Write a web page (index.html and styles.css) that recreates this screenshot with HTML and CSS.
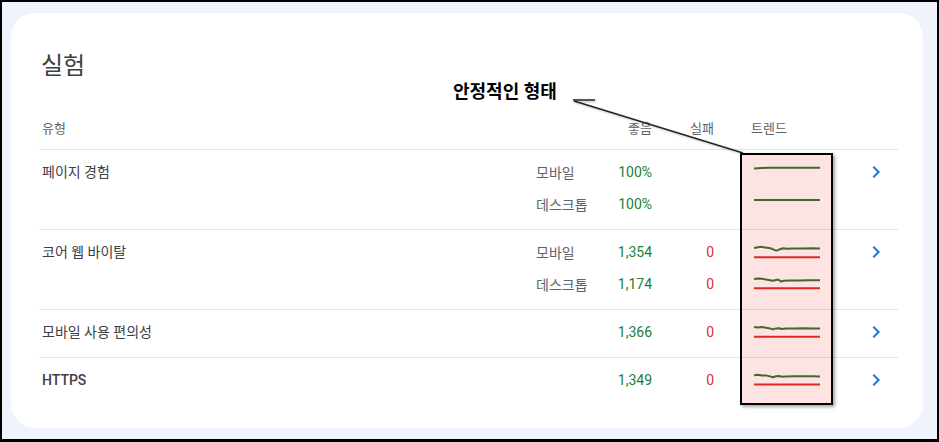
FILE: index.html
```html
<!DOCTYPE html>
<html lang="ko">
<head>
<meta charset="utf-8">
<title>실험</title>
<link rel="stylesheet" href="styles.css">
</head>
<body>
<div class="frame">
  <div class="card">
    <h1 class="title">실험</h1>

    <div class="header">
      <div class="h-type">유형</div>
      <div class="sub">
        <div class="c-dev"></div>
        <div class="c-good">좋음</div>
        <div class="c-fail">실패</div>
        <div class="c-trend h-trend">트렌드</div>
      </div>
      <div class="c-chev"></div>
    </div>

    <div class="row">
      <div class="r-type">페이지 경험</div>
      <div class="subs">
        <div class="sub">
          <div class="c-dev">모바일</div>
          <div class="c-good">100%</div>
          <div class="c-fail"></div>
          <div class="c-trend">
            <svg class="spark" viewBox="0 0 66 20" width="66" height="20"><path class="g" d="M0,6.6 L4,6.2 L8,5.9 L14,5.8 L66,5.8"/></svg>
          </div>
        </div>
        <div class="sub">
          <div class="c-dev">데스크톱</div>
          <div class="c-good">100%</div>
          <div class="c-fail"></div>
          <div class="c-trend">
            <svg class="spark" viewBox="0 0 66 20" width="66" height="20"><path class="g" d="M0,6 L66,6"/></svg>
          </div>
        </div>
      </div>
      <div class="c-chev"><svg viewBox="0 0 24 24" width="24" height="24"><path class="chev" d="M10 6 8.59 7.41 13.17 12l-4.58 4.59L10 18l6-6z"/></svg></div>
    </div>

    <div class="row">
      <div class="r-type">코어 웹 바이탈</div>
      <div class="subs">
        <div class="sub">
          <div class="c-dev">모바일</div>
          <div class="c-good">1,354</div>
          <div class="c-fail">0</div>
          <div class="c-trend">
            <svg class="spark" viewBox="0 0 66 20" width="66" height="20"><path class="g" d="M0,6 L4,5.2 L7,4.8 L11,5.4 L15,6 L18,6.8 L21,8.2 L23,8.6 L26,7.2 L29,6.2 L33,6.8 L40,6.6 L50,6.4 L58,6.3 L66,6.5"/><path class="r" d="M0,15.3 L66,15.3"/></svg>
          </div>
        </div>
        <div class="sub">
          <div class="c-dev">데스크톱</div>
          <div class="c-good">1,174</div>
          <div class="c-fail">0</div>
          <div class="c-trend">
            <svg class="spark" viewBox="0 0 66 20" width="66" height="20"><path class="g" d="M0,5 L4,4.4 L8,4.8 L12,5.6 L16,6.2 L19,6.8 L22,6 L24,5.6 L27,7.4 L30,6.8 L35,6.6 L45,6.4 L55,6.2 L66,6.2"/><path class="r" d="M0,14.3 L66,14.3"/></svg>
          </div>
        </div>
      </div>
      <div class="c-chev"><svg viewBox="0 0 24 24" width="24" height="24"><path class="chev" d="M10 6 8.59 7.41 13.17 12l-4.58 4.59L10 18l6-6z"/></svg></div>
    </div>

    <div class="row">
      <div class="r-type">모바일 사용 편의성</div>
      <div class="subs">
        <div class="sub">
          <div class="c-dev"></div>
          <div class="c-good">1,366</div>
          <div class="c-fail">0</div>
          <div class="c-trend">
            <svg class="spark" viewBox="0 0 66 20" width="66" height="20"><path class="g" d="M0,5 L4,5.6 L8,5 L12,5.8 L16,6.4 L19,7.4 L22,6.4 L25,6.2 L28,7 L32,6.4 L40,6.4 L50,6.2 L58,6.4 L66,6.6"/><path class="r" d="M0,14.8 L66,14.8"/></svg>
          </div>
        </div>
      </div>
      <div class="c-chev"><svg viewBox="0 0 24 24" width="24" height="24"><path class="chev" d="M10 6 8.59 7.41 13.17 12l-4.58 4.59L10 18l6-6z"/></svg></div>
    </div>

    <div class="row last">
      <div class="r-type bold">HTTPS</div>
      <div class="subs">
        <div class="sub">
          <div class="c-dev"></div>
          <div class="c-good">1,349</div>
          <div class="c-fail">0</div>
          <div class="c-trend">
            <svg class="spark" viewBox="0 0 66 20" width="66" height="20"><path class="g" d="M0,5.2 L4,4.8 L8,5.6 L12,5.4 L16,6.4 L19,7.2 L22,6.2 L25,6 L28,6.8 L32,6.4 L40,6.2 L50,6.2 L58,6.2 L66,6.4"/><path class="r" d="M0,14.6 L66,14.6"/></svg>
          </div>
        </div>
      </div>
      <div class="c-chev"><svg viewBox="0 0 24 24" width="24" height="24"><path class="chev" d="M10 6 8.59 7.41 13.17 12l-4.58 4.59L10 18l6-6z"/></svg></div>
    </div>

    <div class="note">안정적인 형태</div>
    <svg class="arrow" viewBox="0 0 185 70" width="185" height="70">
      <path class="arrow-short" d="M7,7 L29,7"/>
      <path class="arrow-line" d="M8,8 L177,60"/>
    </svg>
    <div class="highlight"></div>
  </div>
</div>
</body>
</html>
```

FILE: styles.css
```css
* { box-sizing: border-box; }

html, body {
  margin: 0;
  padding: 0;
  width: 939px;
  height: 442px;
  overflow: hidden;
  background: #000;
}

body {
  font-family: Roboto, "Noto Sans CJK KR", sans-serif;
  color: #3c4043;
}

.frame {
  width: 939px;
  height: 442px;
  border-style: solid;
  border-color: #000;
  border-width: 2px 2px 3px 2px;
  background: #eff3fb;
  padding: 11px 14px 11px 9px;
}

.card {
  position: relative;
  height: 415px;
  background: #fff;
  border-radius: 24px;
  padding: 37px 25px 0 28px;
}

.title {
  margin: 0;
  font-size: 24px;
  line-height: 32px;
  font-weight: 400;
  color: #3c4043;
  padding-left: 2px;
}

.header {
  display: flex;
  margin-top: 24px;
  height: 44px;
  align-items: center;
  border-bottom: 1px solid #e3e3e3;
  font-size: 13px;
  color: #5f6368;
}

.h-type, .r-type {
  width: 497px;
  flex: none;
  padding-left: 3px;
}

.sub {
  display: grid;
  grid-template-columns: 64px 52px 62px 136px;
  align-items: center;
  height: 32px;
}

.header .sub { height: 43px; }

.c-good, .c-fail { text-align: right; }

.c-trend { padding-left: 40px; display: flex; align-items: center; }
.h-trend { padding-left: 37px; }

.c-chev {
  width: 48px;
  flex: none;
  height: 32px;
  display: flex;
  align-items: center;
  justify-content: center;
  padding-left: 3px;
}

.row {
  display: flex;
  align-items: flex-start;
  padding: 6px 0 9px;
  border-bottom: 1px solid #e3e3e3;
  font-size: 14px;
}

.row.last { border-bottom: none; }

.r-type {
  line-height: 32px;
  color: #3c4043;
}

.r-type.bold { font-weight: 500; }

.subs { display: flex; flex-direction: column; }

.row .c-dev { color: #5f6368; }
.row .c-good { color: #188038; }
.row .c-fail { color: #d93025; }

.spark { display: block; overflow: visible; }
.spark path { fill: none; stroke-width: 2; stroke-linejoin: round; stroke-linecap: butt; }
.spark .g { stroke: #237a3b; }
.spark .r { stroke: #d93025; stroke-width: 2; }

.chev { fill: #1a73e8; }

.note {
  position: absolute;
  left: 442px;
  top: 67px;
  font-size: 18px;
  line-height: 24px;
  font-weight: 700;
  color: #000;
  white-space: nowrap;
}

.arrow {
  position: absolute;
  left: 555px;
  top: 80px;
  overflow: visible;
  filter: drop-shadow(1px 1px 1px rgba(0,0,0,0.25));
}

.arrow-short { stroke: #555; stroke-width: 2; fill: none; }
.arrow-line { stroke: #222; stroke-width: 1.4; fill: none; }

.highlight {
  position: absolute;
  left: 729px;
  top: 140px;
  width: 93px;
  height: 252px;
  border: 2px solid #000;
  background: rgba(245, 0, 0, 0.11);
  box-shadow: 2px 2px 3px rgba(0,0,0,0.35);
}
```
